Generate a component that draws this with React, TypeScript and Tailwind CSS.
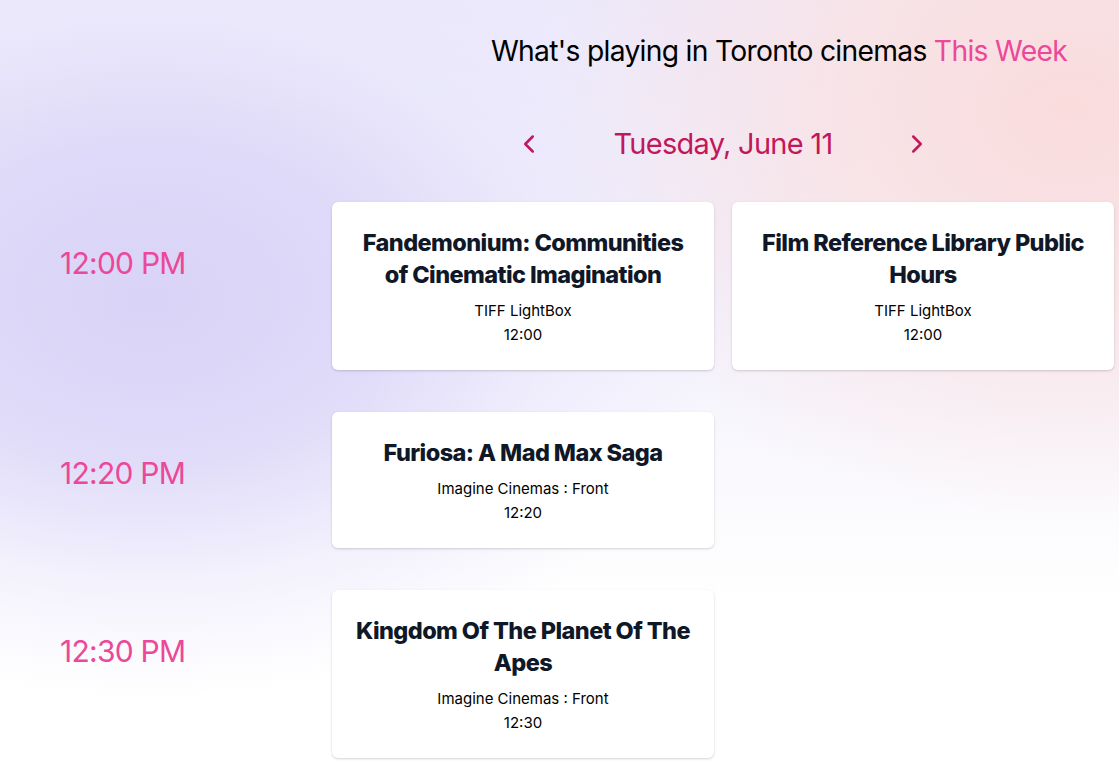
import { ChevronLeft, ChevronRight } from 'lucide-react';

interface Screening {
  title: string;
  venue: string;
  time: string;
}

interface Slot {
  label: string;
  screenings: Screening[];
}

const slots: Slot[] = [
  {
    label: '12:00 PM',
    screenings: [
      { title: 'Fandemonium: Communities of Cinematic Imagination', venue: 'TIFF LightBox', time: '12:00' },
      { title: 'Film Reference Library Public Hours', venue: 'TIFF LightBox', time: '12:00' },
    ],
  },
  {
    label: '12:20 PM',
    screenings: [{ title: 'Furiosa: A Mad Max Saga', venue: 'Imagine Cinemas : Front', time: '12:20' }],
  },
  {
    label: '12:30 PM',
    screenings: [{ title: 'Kingdom Of The Planet Of The Apes', venue: 'Imagine Cinemas : Front', time: '12:30' }],
  },
];

export default function App() {
  return (
    <div className="min-h-[783px] w-[1119px] overflow-hidden bg-white bg-[radial-gradient(ellipse_580px_400px_at_150px_300px,#d9d3f7_0%,rgba(220,215,248,0.85)_40%,rgba(232,229,251,0.5)_70%,rgba(255,255,255,0)_100%),radial-gradient(ellipse_520px_420px_at_1070px_110px,#fadcdc_0%,rgba(251,225,225,0.75)_45%,rgba(255,255,255,0)_100%),linear-gradient(180deg,#ece9fb_0%,#f1effc_35%,#fafafe_62%,#ffffff_78%)] font-['Inter',sans-serif] text-gray-900">
      <header className="flex justify-end pr-[52px] pt-[31px]">
        <h1 className="text-[28.25px] leading-10 tracking-tight text-black">
          What's playing in Toronto cinemas <span className="text-[#ec4899]">This Week</span>
        </h1>
      </header>

      <div className="ml-[332px] mt-[53px] flex w-[782px] items-center justify-center gap-[70px]">
        <button className="text-[#c2185b]">
          <ChevronLeft size={30} strokeWidth={2} />
        </button>
        <p className="text-[29px] leading-10 tracking-tight text-[#c2185b]">Tuesday, June 11</p>
        <button className="text-[#c2185b]">
          <ChevronRight size={30} strokeWidth={2} />
        </button>
      </div>

      <div className="mt-[38px] flex flex-col gap-[42px]">
        {slots.map((slot) => (
          <div key={slot.label} className="flex">
            <div className="w-[332px] shrink-0 pl-[60px] pt-[41px]">
              <p className="text-[30px] leading-10 tracking-tight text-[#ec4899]">{slot.label}</p>
            </div>
            <div className="grid w-[782px] grid-cols-2 gap-[18px]">
              {slot.screenings.map((s) => (
                <ScreeningCard key={s.title} screening={s} />
              ))}
            </div>
          </div>
        ))}
      </div>
    </div>
  );
}

function ScreeningCard({ screening }: { screening: Screening }) {
  return (
    <div className="rounded-md bg-white px-6 pb-[23px] pt-[25px] text-center shadow-[0_1px_3px_rgba(0,0,0,0.12),0_1px_2px_rgba(0,0,0,0.06)]">
      <p className="text-[23.5px] font-extrabold leading-8 tracking-tight text-gray-900">{screening.title}</p>
      <p className="mt-2 text-[15px] leading-6 text-black">{screening.venue}</p>
      <p className="text-[15px] leading-6 text-black">{screening.time}</p>
    </div>
  );
}
